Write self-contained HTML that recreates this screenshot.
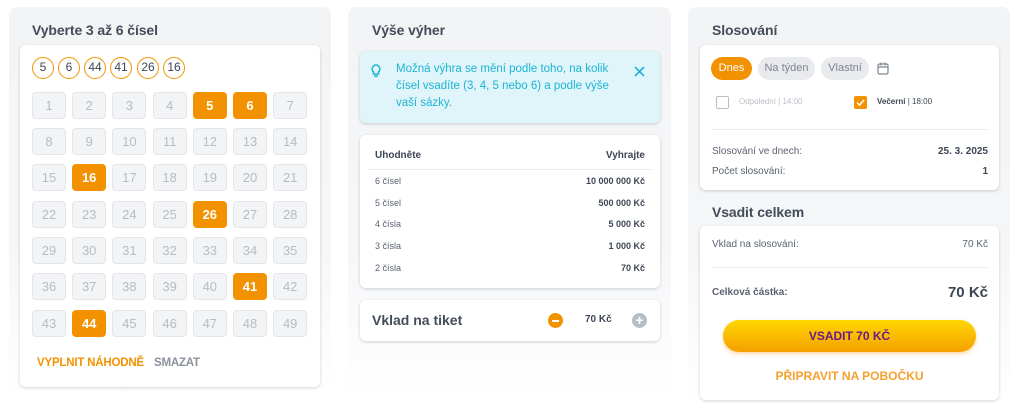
<!DOCTYPE html>
<html><head><meta charset="utf-8"><style>
*{box-sizing:border-box;margin:0;padding:0}
body{width:1024px;height:410px;background:#fff;font-family:"Liberation Sans",sans-serif;color:#3d4654;position:relative;overflow:hidden}
.panel{position:absolute;top:7px;border-radius:8px;background:linear-gradient(#f3f4f6 0,#f5f6f8 60%,#fff 100%)}
.title{position:absolute;font-size:14px;font-weight:bold;color:#434c59;letter-spacing:-0.1px}
.card{position:absolute;background:#fff;border-radius:6px;box-shadow:0 1px 3px rgba(0,0,0,.18)}
.ball{position:absolute;top:57px;width:22px;height:22px;border:1.5px solid #f39200;border-radius:50%;font-size:12px;text-align:center;line-height:19px;color:#3d4654}
.cell{position:absolute;width:34px;height:27px;border:1px solid #e3e5e8;background:#f3f4f6;border-radius:4px;font-size:13px;color:#b7bcc3;text-align:center;line-height:25px}
.cell.on{background:#f39200;border-color:#f39200;color:#fff;font-weight:bold}
.abs{position:absolute}
.row{position:absolute;left:375px;width:270px;font-size:9px;display:flex;justify-content:space-between;color:#5a6270}
.row b{color:#3d4654}
</style></head><body>
<div class="panel" style="left:9px;width:322px;height:390px"></div>
<div class="panel" style="left:348px;width:323px;height:390px"></div>
<div class="panel" style="left:688px;width:322px;height:400px"></div>

<div class="title" style="left:32px;top:22px">Vyberte 3 až 6 čísel</div>
<div class="card" style="left:20px;top:45px;width:300px;height:342px"></div>
<div class="ball" style="left:32px">5</div><div class="ball" style="left:58px">6</div><div class="ball" style="left:84px">44</div><div class="ball" style="left:110px">41</div><div class="ball" style="left:137px">26</div><div class="ball" style="left:163px">16</div>
<div id="grid"></div>
<div class="abs" style="left:37px;top:357px;font-size:11.5px;font-weight:bold;color:#f39200;letter-spacing:-0.2px">VYPLNIT NÁHODNĚ</div>
<div class="abs" style="left:154px;top:357px;font-size:11.5px;font-weight:bold;color:#8a929d;letter-spacing:-0.2px">SMAZAT</div>

<div class="title" style="left:372px;top:22px">Výše výher</div>
<div class="card" style="left:360px;top:51px;width:300px;height:72px;background:#dff5fa"></div>
<svg class="abs" style="left:370px;top:64px" width="12" height="14" viewBox="0 0 12 14"><path d="M6 1a4 4 0 0 0-2.5 7v2h5V8A4 4 0 0 0 6 1zM4 12h4" fill="none" stroke="#1eb4d4" stroke-width="1.5"/></svg>
<div class="abs" style="left:396px;top:61px;width:230px;font-size:11.5px;line-height:17px;color:#1eb4d4">Možná výhra se mění podle toho, na kolik čísel vsadíte (3, 4, 5 nebo 6) a podle výše vaší sázky.</div>
<svg class="abs" style="left:634px;top:66px" width="11" height="11"><path d="M1 1l9 9M10 1l-9 9" stroke="#1eb4d4" stroke-width="1.6"/></svg>
<div class="card" style="left:360px;top:135px;width:300px;height:153px"></div>
<div class="row" style="top:150px;font-size:10px;font-weight:bold;color:#3d4654"><span>Uhodněte</span><span>Vyhrajte</span></div>
<div class="abs" style="left:368px;top:169px;width:284px;height:1px;background:#eceef0"></div>
<div class="row" style="top:176px"><span>6 čísel</span><b>10 000 000 Kč</b></div>
<div class="row" style="top:198px"><span>5 čísel</span><b>500 000 Kč</b></div>
<div class="row" style="top:219px"><span>4 čísla</span><b>5 000 Kč</b></div>
<div class="row" style="top:241px"><span>3 čísla</span><b>1 000 Kč</b></div>
<div class="row" style="top:263px"><span>2 čísla</span><b>70 Kč</b></div>
<div class="card" style="left:360px;top:300px;width:300px;height:41px"></div>
<div class="abs" style="left:372px;top:312px;font-size:14px;font-weight:bold;color:#434c59">Vklad na tiket</div>
<div class="abs" style="left:548px;top:313px;width:15px;height:15px;border-radius:50%;background:#f39200"><div class="abs" style="left:4px;top:6.5px;width:7px;height:2px;background:#fff"></div></div>
<div class="abs" style="left:585px;top:314px;font-size:10px;font-weight:bold">70 Kč</div>
<div class="abs" style="left:632px;top:313px;width:15px;height:15px;border-radius:50%;background:#b8bec6;color:#fff;font-size:14px;line-height:15px;text-align:center;font-weight:bold">+</div>

<div class="title" style="left:712px;top:22px">Slosování</div>
<div class="card" style="left:700px;top:45px;width:299px;height:145px"></div>
<div class="abs" style="left:711px;top:57px;width:41px;height:23px;border-radius:12px;background:#f39200;color:#fff;font-size:11px;line-height:23px;text-align:center">Dnes</div>
<div class="abs" style="left:758px;top:57px;width:57px;height:23px;border-radius:12px;background:#e8eaed;color:#7d8590;font-size:11px;line-height:23px;text-align:center">Na týden</div>
<div class="abs" style="left:821px;top:57px;width:48px;height:23px;border-radius:12px;background:#e8eaed;color:#7d8590;font-size:11px;line-height:23px;text-align:center">Vlastní</div>
<svg class="abs" style="left:877px;top:62px" width="12" height="13"><rect x="1" y="2" width="10" height="10" rx="1.5" fill="none" stroke="#7d8590" stroke-width="1.2"/><path d="M1 5h10M4 0.5v3M8 0.5v3" stroke="#7d8590" stroke-width="1.2"/></svg>
<div class="abs" style="left:716px;top:96px;width:13px;height:13px;border:1.5px solid #b9bec5;border-radius:2px"></div>
<div class="abs" style="left:739px;top:97px;font-size:8px;color:#b9bec5">Odpolední | 14:00</div>
<div class="abs" style="left:854px;top:96px;width:13px;height:13px;background:#f39200;border-radius:2px"><svg width="13" height="13"><path d="M3 6.5l2.5 2.5 4.5-5" fill="none" stroke="#fff" stroke-width="1.5"/></svg></div>
<div class="abs" style="left:877px;top:97px;font-size:8px;color:#3d4654"><b>Večerní</b> | 18:00</div>
<div class="abs" style="left:712px;top:129px;width:276px;height:1px;background:#eceef0"></div>
<div class="abs" style="left:712px;top:146px;font-size:10px;color:#5a6270">Slosování ve dnech:</div>
<div class="abs" style="right:36px;top:146px;font-size:10px;font-weight:bold">25. 3. 2025</div>
<div class="abs" style="left:712px;top:166px;font-size:10px;color:#5a6270">Počet slosování:</div>
<div class="abs" style="right:36px;top:166px;font-size:10px;font-weight:bold">1</div>

<div class="title" style="left:712px;top:204px">Vsadit celkem</div>
<div class="card" style="left:700px;top:226px;width:299px;height:174px"></div>
<div class="abs" style="left:712px;top:239px;font-size:10px;color:#5a6270">Vklad na slosování:</div>
<div class="abs" style="right:36px;top:239px;font-size:10px;color:#5a6270">70 Kč</div>
<div class="abs" style="left:712px;top:267px;width:276px;height:1px;background:#eceef0"></div>
<div class="abs" style="left:712px;top:287px;font-size:10px;font-weight:bold;color:#5a6270">Celková částka:</div>
<div class="abs" style="right:36px;top:284px;font-size:15px;font-weight:bold">70 Kč</div>
<div class="abs" style="left:723px;top:320px;width:253px;height:32px;border-radius:16px;background:linear-gradient(#ffd700,#f5a000);box-shadow:0 2px 4px rgba(243,146,0,.35);color:#6a1a8a;font-size:12px;font-weight:bold;text-align:center;line-height:32px">VSADIT 70 KČ</div>
<div class="abs" style="left:700px;width:299px;top:369px;text-align:center;font-size:12px;font-weight:bold;color:#f5a030">PŘIPRAVIT NA POBOČKU</div>

<script>
var on={5:1,6:1,16:1,26:1,41:1,44:1},h='',ys=[92,128,164,201,237,273,310];
for(var i=1;i<=49;i++){var r=Math.floor((i-1)/7),c=(i-1)%7;h+='<div class="cell'+(on[i]?' on':'')+'" style="left:'+(32+c*40.2)+'px;top:'+ys[r]+'px">'+i+'</div>';}
document.getElementById('grid').innerHTML=h;
</script>
</body></html>
